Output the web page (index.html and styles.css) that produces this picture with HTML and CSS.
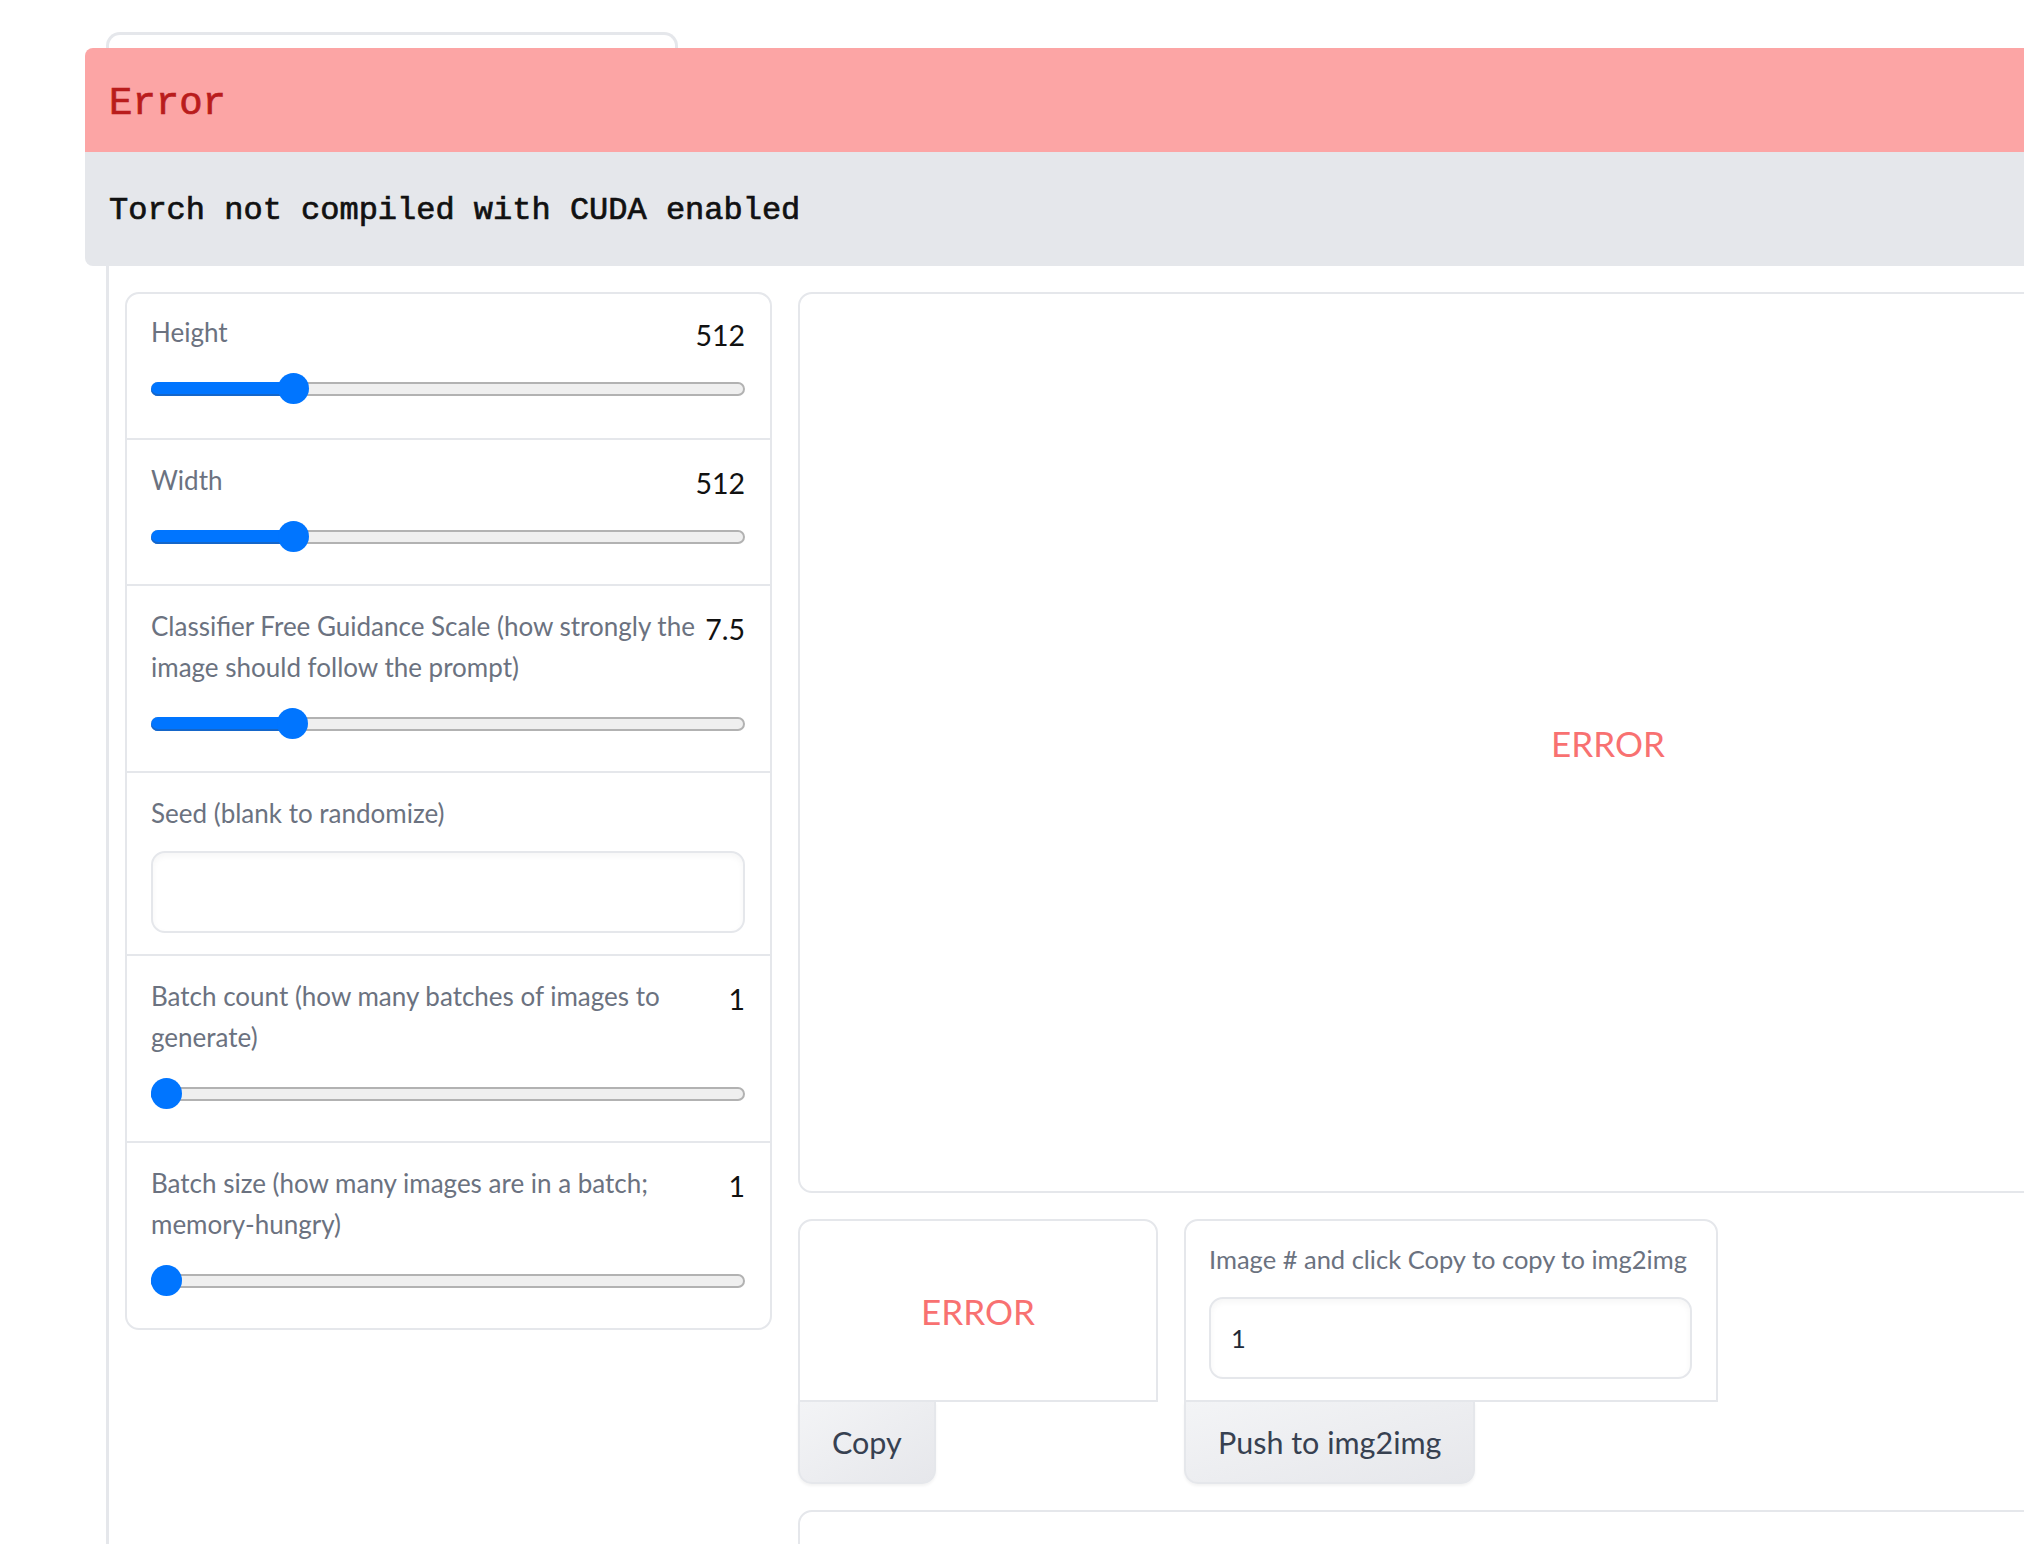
FILE: index.html
```html
<!DOCTYPE html>
<html lang="en">
<head>
    <meta charset="UTF-8">
    <meta name="viewport" content="width=device-width, initial-scale=1.0">
    <title>Stable Diffusion - txt2img</title>
    <link rel="stylesheet" href="styles.css">
</head>
<body>

<div class="app">
    <div class="tabs">
        <div class="tab-nav">
            <div class="tab-btn"></div>
        </div>

        <div class="tab-panel">
            <div class="main-row">

                <!-- Einstellungen -->
                <div class="settings-card">
                    <div class="row">
                        <div class="row-head">
                            <span class="label">Height</span>
                            <span class="value">512</span>
                        </div>
                        <div class="slider" style="--f: 0.2258">
                            <div class="track"><div class="fill"></div></div>
                            <div class="thumb"></div>
                        </div>
                    </div>

                    <div class="row">
                        <div class="row-head">
                            <span class="label">Width</span>
                            <span class="value">512</span>
                        </div>
                        <div class="slider" style="--f: 0.2258">
                            <div class="track"><div class="fill"></div></div>
                            <div class="thumb"></div>
                        </div>
                    </div>

                    <div class="row">
                        <div class="row-head">
                            <span class="label">Classifier Free Guidance Scale (how strongly the image should follow the prompt)</span>
                            <span class="value">7.5</span>
                        </div>
                        <div class="slider" style="--f: 0.2241">
                            <div class="track"><div class="fill"></div></div>
                            <div class="thumb"></div>
                        </div>
                    </div>

                    <div class="row seed-row">
                        <div class="row-head">
                            <label class="label" for="seed">Seed (blank to randomize)</label>
                        </div>
                        <input type="text" id="seed" class="text-input">
                    </div>

                    <div class="row">
                        <div class="row-head">
                            <span class="label">Batch count (how many batches of images to generate)</span>
                            <span class="value">1</span>
                        </div>
                        <div class="slider" style="--f: 0">
                            <div class="track"><div class="fill"></div></div>
                            <div class="thumb"></div>
                        </div>
                    </div>

                    <div class="row">
                        <div class="row-head">
                            <span class="label">Batch size (how many images are in a batch; memory-hungry)</span>
                            <span class="value">1</span>
                        </div>
                        <div class="slider" style="--f: 0">
                            <div class="track"><div class="fill"></div></div>
                            <div class="thumb"></div>
                        </div>
                    </div>
                </div>

                <!-- Ausgabe -->
                <div class="output-col">
                    <div class="gallery">
                        <span class="err-text">ERROR</span>
                    </div>

                    <div class="actions">
                        <div class="action-group copy-group">
                            <div class="action-card centered">
                                <span class="err-text">ERROR</span>
                            </div>
                            <button class="btn">Copy</button>
                        </div>

                        <div class="action-group img-group">
                            <div class="action-card">
                                <label class="label" for="img-num">Image # and click Copy to copy to img2img</label>
                                <input type="text" id="img-num" class="text-input" value="1">
                            </div>
                            <button class="btn">Push to img2img</button>
                        </div>
                    </div>

                    <div class="info-card"></div>
                </div>

            </div>
        </div>
    </div>

    <!-- Fehlermeldung -->
    <div class="error-toast">
        <div class="error-head">Error</div>
        <div class="error-body">Torch not compiled with CUDA enabled</div>
    </div>
</div>

</body>
</html>
```

FILE: styles.css
```css
html, body {
    overflow: hidden;
}

body {
    font-family: Lato, "Open Sans", sans-serif;
    margin: 0;
    padding: 0;
    background-color: white;
    color: #1f2937;
}

.app {
    position: relative;
    padding: 32px 0 0 106px;
    width: 2600px;
}

/* Tabs */
.tab-btn {
    width: 572px;
    height: 67px;
    box-sizing: border-box;
    border: 3px solid #e5e7eb;
    border-bottom: none;
    border-radius: 14px 14px 0 0;
    background: white;
}

.tab-panel {
    border-left: 3px solid #e5e7eb;
    border-top: 3px solid #e5e7eb;
    padding: 190px 16px 0 16px; /* Prompt-Bereich liegt unter der Fehlermeldung */
    min-height: 1400px;
}

.main-row {
    display: flex;
    align-items: flex-start;
    gap: 26px;
}

/* Einstellungen links */
.settings-card {
    width: 647px;
    flex-shrink: 0;
    box-sizing: border-box;
    border: 2px solid #e5e7eb;
    border-radius: 14px;
    overflow: hidden;
}

.row {
    padding: 18px 25px 34px 24px;
}

.row + .row {
    border-top: 2px solid #e5e7eb;
    padding-top: 20px;
    padding-bottom: 32px;
}

.row + .seed-row {
    padding-bottom: 21px;
}

.row-head {
    display: flex;
    justify-content: space-between;
    align-items: flex-start;
    gap: 8px;
}

.label {
    display: block;
    font-size: 26px;
    line-height: 41px;
    color: #6b7280;
}

.value {
    font-size: 28.5px;
    line-height: 35px;
    margin-top: 6px;
    color: #111;
    flex-shrink: 0;
}

/* Slider */
.slider {
    position: relative;
    display: flex;
    align-items: center;
    height: 31px;
    margin-top: 20px;
}

.track {
    flex: 1;
    display: flex;
    height: 14px;
    box-sizing: border-box;
    border: 2px solid #b2b2b2;
    border-radius: 7px;
    background-color: #efefef;
}

.fill {
    width: calc(15.5px + (100% + 4px - 31px) * var(--f));
    margin: -2px 0 -2px -2px;
    border-radius: 7px 0 0 7px;
    background-color: #0075ff;
    box-shadow: inset 0 -2px 0 #1566c9;
}

.thumb {
    position: absolute;
    top: 0;
    left: calc((100% - 31px) * var(--f));
    width: 31px;
    height: 31px;
    border-radius: 50%;
    background-color: #0075ff;
}

.text-input {
    display: block;
    width: 100%;
    height: 82px;
    margin-top: 17px;
    padding: 0 20px;
    box-sizing: border-box;
    border: 2px solid #e5e7eb;
    border-radius: 14px;
    box-shadow: inset 0 3px 6px rgba(0, 0, 0, 0.04);
    font-family: Lato, sans-serif;
    font-size: 25.5px;
    color: #1f2937;
    background: white;
    outline: none;
}

/* Ausgabe rechts */
.output-col {
    display: flex;
    flex-direction: column;
    gap: 26px;
    width: 1620px;
    flex-shrink: 0;
}

.gallery {
    height: 901px;
    box-sizing: border-box;
    border: 2px solid #e5e7eb;
    border-radius: 14px;
    display: flex;
    align-items: center;
    justify-content: center;
}

.err-text {
    font-size: 35px;
    color: #f87171;
}

.actions {
    display: flex;
    align-items: flex-start;
    gap: 26px;
}

.action-group {
    display: flex;
    flex-direction: column;
    align-items: flex-start;
}

.copy-group {
    width: 360px;
}

.img-group {
    width: 534px;
}

.action-card {
    width: 100%;
    box-sizing: border-box;
    border: 2px solid #e5e7eb;
    border-radius: 14px 14px 0 0;
    padding: 18px 24px 21px 23px;
}

.action-card .label {
    font-size: 25.5px;
}

.action-card.centered {
    height: 183px;
    padding: 0;
    display: flex;
    align-items: center;
    justify-content: center;
}

.btn {
    height: 82px;
    padding: 0 32px;
    border: 2px solid #e5e7eb;
    border-top: none;
    border-radius: 0 0 14px 14px;
    background: linear-gradient(to bottom right, #f3f4f6, #e6e7eb);
    box-shadow: 0 2px 3px rgba(0, 0, 0, 0.05);
    font-family: Lato, sans-serif;
    font-size: 30.5px;
    color: #374151;
    cursor: pointer;
}

.info-card {
    height: 300px;
    border: 2px solid #e5e7eb;
    border-radius: 14px 14px 0 0;
}

/* Fehlermeldung oben */
.error-toast {
    position: absolute;
    top: 48px;
    left: 85px;
    width: 2400px;
    border-radius: 8px 0 0 8px;
    overflow: hidden;
    font-family: "Liberation Mono", "DejaVu Sans Mono", monospace;
    -webkit-text-stroke: 0.7px currentColor;
}

.error-head {
    background-color: #fca5a5;
    color: #b91c1c;
    font-size: 39px;
    line-height: 44px;
    padding: 34px 24px 26px;
}

.error-body {
    background-color: #e5e7eb;
    color: #111;
    font-size: 32px;
    line-height: 36px;
    padding: 41px 24px 37px;
}
```
